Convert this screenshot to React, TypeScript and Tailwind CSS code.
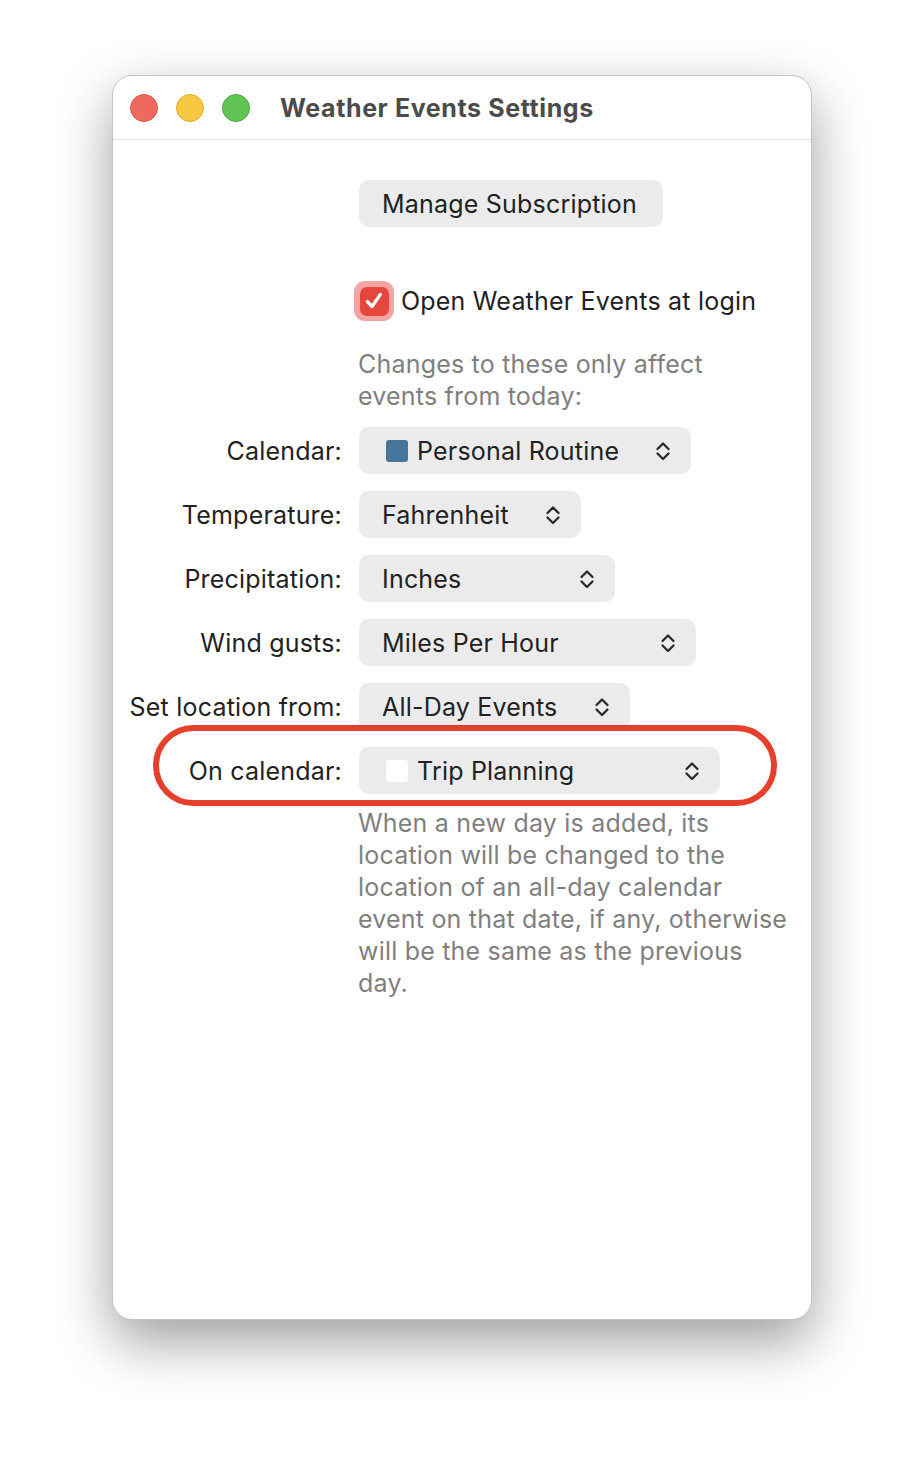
import React from 'react'

const font = { fontFamily: 'Inter, "Noto Sans", sans-serif' }

function Chevrons() {
  return (
    <svg width="16" height="24" viewBox="0 0 16 24" fill="none" stroke="#2a2a2a" strokeWidth="2.3" strokeLinecap="round" strokeLinejoin="round">
      <path d="M2.5 10 L8 4.5 L13.5 10" />
      <path d="M2.5 14.5 L8 20 L13.5 14.5" />
    </svg>
  )
}

interface PopupProps {
  label: string
  value: string
  width: string
  swatch?: string
}

function PopupRow({ label, value, width, swatch }: PopupProps) {
  return (
    <div className="flex items-center h-[47px]">
      <div className="w-[229px] shrink-0 pt-[2px] text-right text-[25px] tracking-[0.2px] text-[#222]">{label}</div>
      <div className={`ml-[17px] h-[47px] ${width} rounded-[10px] bg-[#ebebeb] flex items-center justify-between pl-[23px] pr-[20px]`}>
        <div className="flex items-center">
          {swatch && (
            <span className={`mr-[9px] ml-[4px] h-[22px] w-[22px] rounded-[3px] ${swatch}`} />
          )}
          <span className="pt-[2px] text-[25px] tracking-[0.2px] text-[#222]">{value}</span>
        </div>
        <Chevrons />
      </div>
    </div>
  )
}

export default function App() {
  return (
    <div className="min-h-[1468px] w-[924px] bg-white pt-[75px] pl-[112px]" style={font}>
      <div className="relative w-[700px] h-[1245px] rounded-[20px] bg-white border border-[#c4c4c4] shadow-[0_22px_55px_rgba(0,0,0,0.38)]">
        {/* title bar */}
        <div className="h-[64px] flex items-center border-b border-[#e2e2e2] pl-[17px]">
          <div className="flex gap-[18px]">
            <span className="h-[28px] w-[28px] rounded-full bg-[#ee6a5f] border border-[#d8554b]" />
            <span className="h-[28px] w-[28px] rounded-full bg-[#f5c840] border border-[#dfab2c]" />
            <span className="h-[28px] w-[28px] rounded-full bg-[#61c454] border border-[#4fab41]" />
          </div>
          <div className="ml-[30px] pt-[2px] text-[25px] tracking-[0.6px] font-bold text-[#4b4b4b]">Weather Events Settings</div>
        </div>

        <div className="pt-[40px]">
          {/* manage */}
          <div className="pl-[246px]">
            <button className="h-[47px] w-[304px] rounded-[10px] bg-[#ebebeb] text-left pl-[23px] pt-[3px] text-[25px] tracking-[0.2px] text-[#222]">
              Manage Subscription
            </button>
          </div>

          {/* login checkbox */}
          <div className="mt-[53px] pl-[241px] flex items-center h-[42px]">
            <span className="h-[40px] w-[40px] rounded-[11px] bg-[#f3a5a2] flex items-center justify-center">
              <span className="h-[29px] w-[29px] rounded-[7px] bg-[#e5473f] flex items-center justify-center">
                <svg width="22" height="22" viewBox="0 0 20 20" fill="none" stroke="white" strokeWidth="3" strokeLinecap="round" strokeLinejoin="round">
                  <path d="M4 10.5 L8.2 15 L15.8 4" />
                </svg>
              </span>
            </span>
            <span className="ml-[7px] pt-[2px] text-[25px] tracking-[0.2px] text-[#222]">Open Weather Events at login</span>
          </div>

          <p className="mt-[25px] pl-[245px] pt-[1px] text-[25px] tracking-[0.2px] leading-[32px] text-[#7f7f7f]">
            Changes to these only affect
            <br />
            events from today:
          </p>

          <div className="mt-[15px] flex flex-col gap-[17px]">
            <PopupRow label="Calendar:" value="Personal Routine" width="w-[332px]" swatch="bg-[#46759c]" />
            <PopupRow label="Temperature:" value="Fahrenheit" width="w-[222px]" />
            <PopupRow label="Precipitation:" value="Inches" width="w-[256px]" />
            <PopupRow label="Wind gusts:" value="Miles Per Hour" width="w-[337px]" />
            <PopupRow label="Set location from:" value="All-Day Events" width="w-[271px]" />
            <div className="relative">
              <PopupRow label="On calendar:" value="Trip Planning" width="w-[361px]" swatch="bg-white" />
              {/* annotation */}
              <div className="pointer-events-none absolute left-[40px] top-[-22px] h-[81px] w-[624px] rounded-full border-[6px] border-[#e5402b]" />
            </div>
          </div>

          <p className="mt-[13px] pl-[245px] text-[25px] tracking-[0.2px] leading-[32px] text-[#7f7f7f]">
            When a new day is added, its
            <br />
            location will be changed to the
            <br />
            location of an all-day calendar
            <br />
            event on that date, if any, otherwise
            <br />
            will be the same as the previous
            <br />
            day.
          </p>
        </div>
      </div>
    </div>
  )
}
